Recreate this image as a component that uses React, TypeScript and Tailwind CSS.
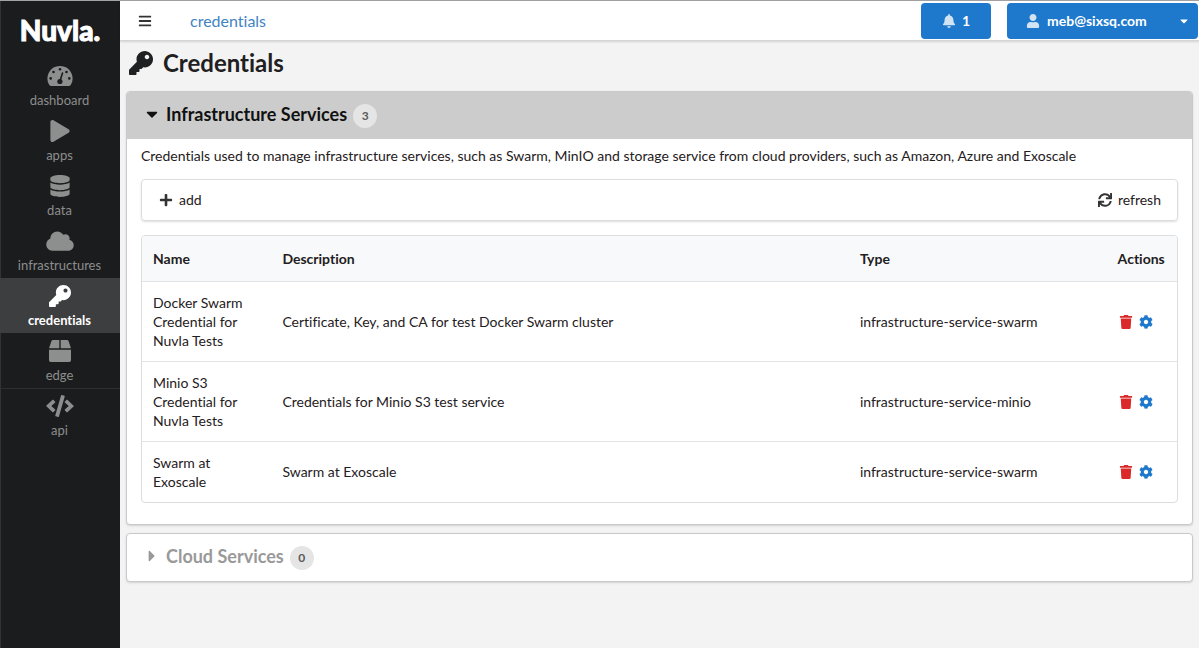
import { useState } from "react";
import type { ComponentType, ReactNode } from "react";
import {
  FaBars,
  FaBell,
  FaBox,
  FaCaretDown,
  FaCaretRight,
  FaCloud,
  FaCode,
  FaCog,
  FaDatabase,
  FaKey,
  FaPlay,
  FaPlus,
  FaSync,
  FaTrash,
  FaUser,
} from "react-icons/fa";

function GaugeIcon({ className }: { className?: string }) {
  return (
    <svg viewBox="0 0 25 22" className={className} aria-hidden="true">
      <path
        fill="currentColor"
        d="M12.5 1A12.4 12.4 0 0 0 1.8 19.9q.7 1.1 1.9 1.1h17.6q1.2 0 1.9-1.1A12.4 12.4 0 0 0 12.5 1z"
      />
      <g fill="#1b1c1d">
        <circle cx="3.2" cy="13.4" r="1.3" />
        <circle cx="6" cy="7" r="1.3" />
        <circle cx="12.5" cy="4.2" r="1.3" />
        <circle cx="19" cy="7" r="1.3" />
        <circle cx="21.8" cy="13.4" r="1.3" />
        <circle cx="12.4" cy="16.5" r="2.6" />
      </g>
      <path d="M12.6 15.8 15 8" stroke="#1b1c1d" strokeWidth="1.6" strokeLinecap="round" />
    </svg>
  );
}

const navItems: { label: string; icon: ComponentType<{ className?: string }> }[] = [
  { label: "dashboard", icon: GaugeIcon },
  { label: "apps", icon: FaPlay },
  { label: "data", icon: FaDatabase },
  { label: "infrastructures", icon: FaCloud },
  { label: "credentials", icon: FaKey },
  { label: "edge", icon: FaBox },
  { label: "api", icon: FaCode },
];

const credentials = [
  {
    name: "Docker Swarm Credential for Nuvla Tests",
    description: "Certificate, Key, and CA for test Docker Swarm cluster",
    type: "infrastructure-service-swarm",
  },
  {
    name: "Minio S3 Credential for Nuvla Tests",
    description: "Credentials for Minio S3 test service",
    type: "infrastructure-service-minio",
  },
  {
    name: "Swarm at Exoscale",
    description: "Swarm at Exoscale",
    type: "infrastructure-service-swarm",
  },
];

function Sidebar() {
  return (
    <nav className="w-[120px] shrink-0 bg-[#1b1c1d] shadow-[inset_1px_0_0_0_#333]">
      <a
        href="#home"
        className="flex h-[57px] items-center justify-center text-[28px] leading-8 font-black text-white [-webkit-text-stroke:1px_white]"
      >
        Nuvla.
      </a>
      <ul>
        {navItems.map(({ label, icon: Icon }) => {
          const active = label === "credentials";
          return (
            <li key={label}>
              <a
                href={`#${label}`}
                aria-current={active ? "page" : undefined}
                className={`flex h-[55px] flex-col items-center gap-[5px] pr-px pt-[7px] text-[13px] leading-4 ${
                  active ? "bg-[#3d3e3f] font-bold text-white" : "text-[#8d8e8e]"
                } ${label === "api" ? "shadow-[inset_0_1px_0_0_#2d2e2f]" : ""}`}
              >
                <Icon className="h-[22px] w-7 shrink-0" />
                {label}
              </a>
            </li>
          );
        })}
      </ul>
    </nav>
  );
}

function TopBar() {
  return (
    <header className="flex h-10 items-center border-b border-[#d4d4d5] bg-white pr-px shadow-[0_1px_2px_0_rgba(34,36,38,0.15)]">
      <button type="button" aria-label="Toggle menu" className="ml-[18px] text-[#333]">
        <FaBars className="size-3.5" />
      </button>
      <a href="#credentials" className="ml-[38px] text-base text-[#4183c4]">
        credentials
      </a>
      <button
        type="button"
        aria-label="Notifications"
        className="ml-auto flex h-9 w-[70px] items-center justify-center gap-1.5 rounded bg-[#1e78cc] font-bold text-white"
      >
        <FaBell className="size-3.5 opacity-80" />1
      </button>
      <button
        type="button"
        aria-haspopup="menu"
        className="ml-4 flex h-9 w-[191px] items-center gap-[7px] rounded bg-[#1e78cc] pr-2 pl-[19px] font-bold text-white"
      >
        <FaUser className="size-3.5 opacity-80" />
        meb@sixsq.com
        <FaCaretDown className="ml-auto size-3" />
      </button>
    </header>
  );
}

function Section({
  title,
  count,
  initiallyOpen = false,
  children,
}: {
  title: string;
  count: number;
  initiallyOpen?: boolean;
  children?: ReactNode;
}) {
  const [open, setOpen] = useState(initiallyOpen);
  const Caret = open ? FaCaretDown : FaCaretRight;
  return (
    <section className="overflow-hidden rounded border border-[#c8c9ca] bg-white shadow-[0_1px_2px_0_rgba(34,36,38,0.15)]">
      <h2 className={open ? "bg-[#cccccc] text-[#111]" : "text-[#999]"}>
        <button
          type="button"
          aria-expanded={open}
          onClick={() => setOpen(!open)}
          className="flex h-[47px] w-full items-center pb-[3px] pl-[15px] text-lg leading-6 font-bold"
        >
          <Caret className="mr-1 w-5" />
          {title}
          <span className="mt-1 ml-1.5 flex size-6 items-center justify-center rounded-full bg-[#e5e5e5] text-xs text-[#5a5a5a]">
            {count}
          </span>
        </button>
      </h2>
      {open && children}
    </section>
  );
}

function CredentialsTable() {
  return (
    <div className="mt-3.5 overflow-hidden rounded border border-[#dcddde]">
      <table className="w-full table-fixed text-left leading-[19px]">
        <thead className="bg-[#f8f9fb]">
          <tr className="h-[45px]">
            <th className="w-[12.5%] px-[11px]">Name</th>
            <th className="w-[55.8%] px-[11px]">Description</th>
            <th className="w-[24.9%] px-[11px]">Type</th>
            <th className="px-[11px]">Actions</th>
          </tr>
        </thead>
        <tbody>
          {credentials.map((row) => (
            <tr key={row.name} className="border-t border-[#e2e3e4]">
              <td className="px-[11px] py-[11px]">{row.name}</td>
              <td className="px-[11px]">{row.description}</td>
              <td className="px-[11px]">{row.type}</td>
              <td className="px-[11px]">
                <div className="flex gap-1.5 pt-px pl-px">
                  <button type="button" aria-label={`Delete ${row.name}`} className="text-[#db2828]">
                    <FaTrash className="size-3.5" />
                  </button>
                  <button type="button" aria-label={`Configure ${row.name}`} className="text-[#1e78cc]">
                    <FaCog className="size-3.5" />
                  </button>
                </div>
              </td>
            </tr>
          ))}
        </tbody>
      </table>
    </div>
  );
}

export default function App() {
  return (
    <div className="flex min-h-screen border-t border-[#a3a3a3] bg-[#f3f3f3] font-['Lato',sans-serif] text-sm text-[#1f2021] [font-variant-ligatures:none]">
      <Sidebar />
      <div className="min-w-0 flex-1">
        <TopBar />
        <main className="flex flex-col gap-2 px-1.5">
          <h1 className="flex h-[42px] items-center gap-2.5 pt-0.5 pl-[3px] text-2xl font-bold">
            <FaKey className="size-6" />
            Credentials
          </h1>
          <Section title="Infrastructure Services" count={3} initiallyOpen>
            <div className="px-3.5 pt-[7px] pb-[21px]">
              <p className="leading-5">
                Credentials used to manage infrastructure services, such as Swarm, MinIO and storage
                service from cloud providers, such as Amazon, Azure and Exoscale
              </p>
              <div className="mt-[13px] flex h-[42px] items-center justify-between rounded border border-[#dcddde] px-4 pb-px shadow-[0_1px_2px_0_rgba(34,36,38,0.15)]">
                <button type="button" className="flex items-center gap-1.5 pl-px">
                  <FaPlus className="size-3.5 text-[#333]" />
                  add
                </button>
                <button type="button" className="flex items-center gap-1.5">
                  <FaSync className="size-3.5 text-[#333]" />
                  refresh
                </button>
              </div>
              <CredentialsTable />
            </div>
          </Section>
          <Section title="Cloud Services" count={0} />
        </main>
      </div>
    </div>
  );
}
